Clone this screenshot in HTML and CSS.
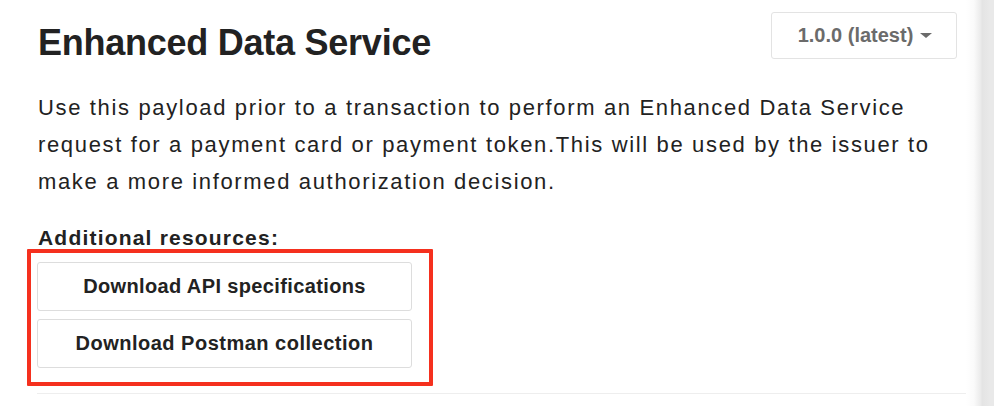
FILE: index.html
```html
<!DOCTYPE html>
<html>
<head>
<meta charset="utf-8">
<link rel="stylesheet" href="styles.css">
</head>
<body>
<div class="page">
  <main class="content">
    <header class="head">
      <h1 class="title">Enhanced Data Service</h1>
      <button class="version">1.0.0 (latest) <span class="caret"></span></button>
    </header>
    <p class="desc">Use this payload prior to a transaction to perform an Enhanced Data Service request for a payment card or payment token.This will be used by the issuer to make a more informed authorization decision.</p>
    <h3 class="res-title">Additional resources:</h3>
    <div class="res">
      <div class="res-buttons">
        <button class="btn btn-api">Download API specifications</button>
        <button class="btn btn-postman">Download Postman collection</button>
      </div>
      <div class="highlight"></div>
    </div>
    <hr class="rule">
  </main>
  <div class="side"></div>
</div>
</body>
</html>
```
FILE: styles.css
```css
html, body {
  margin: 0;
  padding: 0;
  background: #fff;
}
.page {
  display: flex;
  width: 994px;
  height: 406px;
  overflow: hidden;
  font-family: "Liberation Sans", Arial, sans-serif;
  color: #222;
}
.content {
  width: 929px;
  padding-left: 37px;
  flex: none;
}
.head {
  display: flex;
  justify-content: space-between;
  align-items: flex-start;
  padding-top: 12px;
}
.title {
  margin: 12px 0 0 1px;
  font-size: 36px;
  font-weight: 700;
  line-height: 38px;
  letter-spacing: -0.25px;
  color: #222;
}
.version {
  width: 186px;
  height: 47px;
  margin-right: 9px;
  border: 1px solid #e3e3e3;
  border-radius: 3px;
  background: #fff;
  font-family: inherit;
  font-size: 20px;
  font-weight: 700;
  color: #6b6b6b;
  display: flex;
  align-items: center;
  justify-content: center;
  gap: 4px;
  padding: 0 0 0 2px;
}
.caret {
  display: inline-block;
  width: 0;
  height: 0;
  border-left: 6.5px solid transparent;
  border-right: 6.5px solid transparent;
  border-top: 5px solid #6b6b6b;
  margin-left: 3px;
}
.desc {
  margin: 27px 0 0 1px;
  font-size: 22px;
  line-height: 37px;
  letter-spacing: 1.65px;
  color: #222;
}
.res-title {
  margin: 26px 0 0 1px;
  font-size: 21px;
  line-height: 24px;
  font-weight: 700;
  letter-spacing: 1.2px;
}
.res {
  position: relative;
  margin-top: 12px;
}
.res-buttons {
  display: flex;
  flex-direction: column;
  gap: 8px;
  width: 375px;
}
.btn {
  height: 49px;
  border: 1px solid #ddd;
  border-radius: 3px;
  background: #fff;
  font-family: inherit;
  font-size: 20px;
  font-weight: 700;
  color: #222;
  padding: 0;
}
.btn-api {
  letter-spacing: 0.37px;
}
.btn-postman {
  letter-spacing: 0.5px;
}
.highlight {
  position: absolute;
  left: -10px;
  top: -13px;
  width: 398px;
  height: 129px;
  border: 4px solid #f5301e;
  border-radius: 1px;
}
.rule {
  margin: 25px 0 0 0;
  border: 0;
  border-top: 1px solid #eee;
}
.side {
  flex: 1;
  background: linear-gradient(to right, #fff 0px, #fafafa 8px, #eaeaea 15px, #e4e4e4 16px, #e9e9e9 24px);
}
```
